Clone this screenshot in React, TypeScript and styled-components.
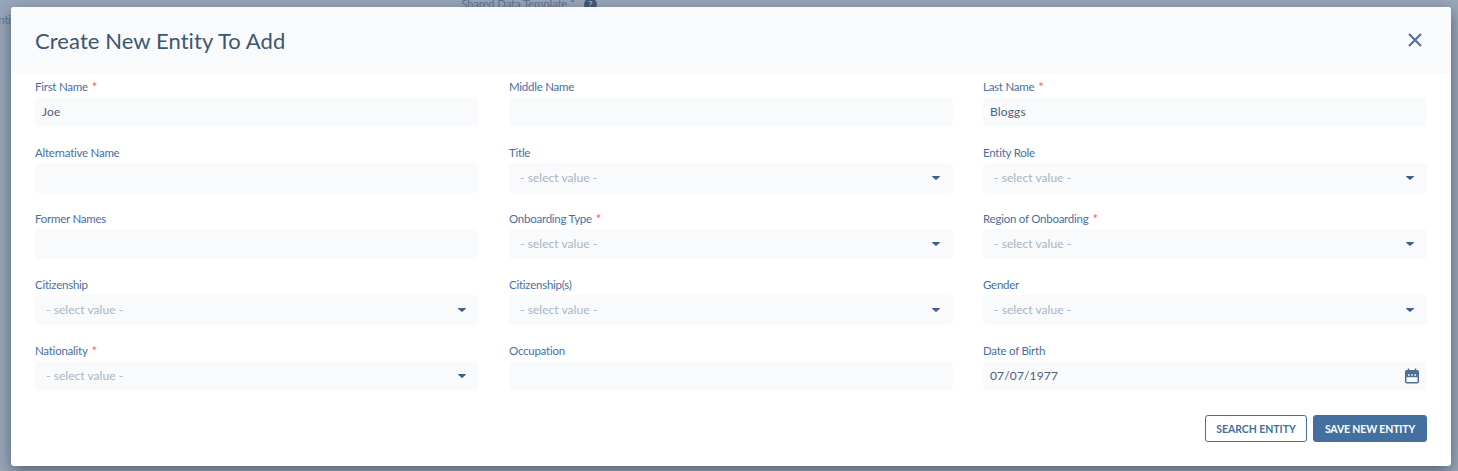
import React from "react";
import styled, { createGlobalStyle } from "styled-components";

const Global = createGlobalStyle`
  html, body { margin: 0; padding: 0; }
  body { font-family: "Lato", "Noto Sans", sans-serif; }
`;

const Page = styled.div`
  position: relative;
  width: 1458px;
  height: 471px;
  overflow: hidden;
  background: #98a7b9;
  padding: 7px 7px 5px 11px;
  box-sizing: border-box;
`;

const BehindText = styled.span<{ $x: number; $y: number }>`
  position: absolute;
  left: ${(p) => p.$x}px;
  top: ${(p) => p.$y}px;
  font-size: 11.5px;
  letter-spacing: -0.2px;
  line-height: 14px;
  color: #5f7593;
  display: flex;
  align-items: center;
  gap: 9px;
`;

const HelpDot = styled.span`
  width: 13px;
  height: 13px;
  border-radius: 50%;
  background: #41597a;
  color: #a0aec0;
  font-size: 10px;
  font-weight: 700;
  line-height: 13px;
  text-align: center;
`;

const Modal = styled.div`
  position: relative;
  height: 459px;
  background: #fff;
  border-radius: 3px;
  box-shadow: 0 5px 15px rgba(20, 30, 45, 0.5);
  display: flex;
  flex-direction: column;
`;

const Header = styled.header`
  height: 66px;
  flex: none;
  background: #f8fafc;
  border-radius: 3px 3px 0 0;
  padding: 0 29px 0 24px;
  display: flex;
  align-items: center;
  justify-content: space-between;
`;

const Title = styled.h2`
  margin: 0;
  font-family: "Lato", sans-serif;
  font-weight: 400;
  font-size: 22px;
  letter-spacing: 0.08px;
  color: #3f566f;
`;

const CloseButton = styled.button`
  border: 0;
  background: none;
  padding: 0;
  display: flex;
`;

const Body = styled.div`
  padding: 7px 24px 0;
  flex: 1;
  display: flex;
  flex-direction: column;
`;

const Grid = styled.div`
  display: grid;
  grid-template-columns: repeat(3, 444px);
  column-gap: 30px;
  row-gap: 19px;
`;

const Field = styled.div`
  display: flex;
  flex-direction: column;
`;

const Label = styled.label`
  height: 17px;
  font-size: 11.5px;
  letter-spacing: -0.25px;
  line-height: 14px;
  color: #4a6f9f;
  display: block;
`;

const Required = styled.span`
  color: #f56565;
  font-size: 13px;
  line-height: 10px;
  margin-left: 4px;
  vertical-align: -1px;
`;

const Control = styled.div<{ $select?: boolean }>`
  height: 30px;
  border-radius: 4px;
  background: #f8fafc;
  padding: 0 ${(p) => (p.$select ? "13px 0 11px" : "7px")};
  display: flex;
  align-items: center;
  justify-content: space-between;
  font-size: 12px;
  line-height: 28px;
  padding-bottom: 1px;
  box-sizing: border-box;
  letter-spacing: 0.15px;
  color: #4f6178;
`;

const Placeholder = styled.span`
  color: #a9b6c6;
  letter-spacing: 0.05px;
`;

const Footer = styled.div`
  display: flex;
  justify-content: flex-end;
  gap: 6px;
  margin-top: 24px;
`;

const Button = styled.button<{ $primary?: boolean }>`
  height: 27px;
  box-sizing: border-box;
  border-radius: 3px;
  border: 1px solid #44709f;
  background: ${(p) => (p.$primary ? "#44709f" : "#fff")};
  color: ${(p) => (p.$primary ? "#fff" : "#44709f")};
  font-family: "Lato", sans-serif;
  font-weight: 700;
  font-size: 10.5px;
  letter-spacing: ${(p) => (p.$primary ? "-0.15px" : "-0.05px")};
  padding: 0;
  width: ${(p) => (p.$primary ? "114px" : "102px")};
`;

const Caret = () => (
  <svg width="8" height="4" viewBox="0 0 8 5" preserveAspectRatio="none"><path d="M.6 0h6.8c.5 0 .7.5.4.9L4.4 4.7a.5.5 0 0 1-.8 0L.2.9C-.1.5.1 0 .6 0z" fill="#3f6088" /></svg>
);

const CalendarIcon = () => (
  <svg width="16" height="16" viewBox="0 0 16 16">
    <path d="M4.5 .5v2.5M11.5 .5v2.5" stroke="#4f6f94" strokeWidth="1.5" />
    <rect x="1.7" y="2.7" width="12.6" height="12" rx="1.2" fill="none" stroke="#4f6f94" strokeWidth="1.5" />
    <rect x="1.7" y="2.7" width="12.6" height="6.5" fill="#4f6f94" />
    <path d="M4 7h1.6M7.2 7h1.6M10.4 7h1.6" stroke="#f8fafc" strokeWidth="1.4" />
  </svg>
);

type F = { label: string; req?: boolean; value?: string; select?: boolean; date?: boolean };

const fields: F[] = [
  { label: "First Name", req: true, value: "Joe" },
  { label: "Middle Name" },
  { label: "Last Name", req: true, value: "Bloggs" },
  { label: "Alternative Name" },
  { label: "Title", select: true },
  { label: "Entity Role", select: true },
  { label: "Former Names" },
  { label: "Onboarding Type", req: true, select: true },
  { label: "Region of Onboarding", req: true, select: true },
  { label: "Citizenship", select: true },
  { label: "Citizenship(s)", select: true },
  { label: "Gender", select: true },
  { label: "Nationality", req: true, select: true },
  { label: "Occupation" },
  { label: "Date of Birth", value: "07/07/1977", date: true },
];

export default function App() {
  return (
    <Page>
      <Global />
      <BehindText $x={461} $y={-3}>Shared Data Template * <HelpDot>?</HelpDot></BehindText>
      <BehindText $x={-8} $y={13}>Enti</BehindText>
      <Modal>
        <Header>
          <Title>Create New Entity To Add</Title>
          <CloseButton aria-label="Close">
            <svg width="14" height="14" viewBox="0 0 14 14">
              <path d="M1 1l12 12M13 1L1 13" stroke="#4f7196" strokeWidth="2" />
            </svg>
          </CloseButton>
        </Header>
        <Body>
          <Grid>
            {fields.map((f) => (
              <Field key={f.label}>
                <Label>
                  {f.label}
                  {f.req && <Required>*</Required>}
                </Label>
                <Control $select={f.select}>
                  {f.select ? <Placeholder>- select value -</Placeholder> : <span>{f.value}</span>}
                  {f.select && <Caret />}
                  {f.date && <CalendarIcon />}
                </Control>
              </Field>
            ))}
          </Grid>
          <Footer>
            <Button>SEARCH ENTITY</Button>
            <Button $primary>SAVE NEW ENTITY</Button>
          </Footer>
        </Body>
      </Modal>
    </Page>
  );
}
